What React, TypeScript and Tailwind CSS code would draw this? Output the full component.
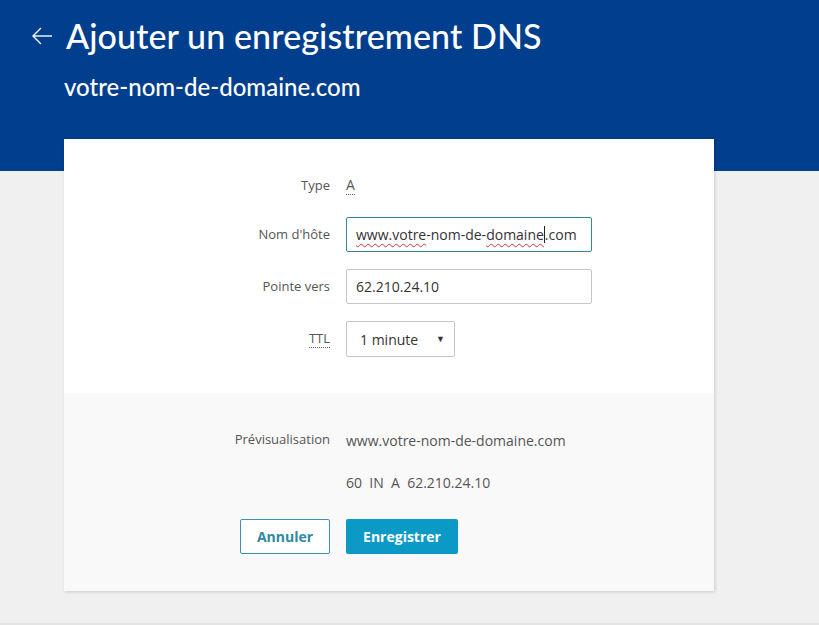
const labelCls = 'w-[282px] shrink-0 pr-4 text-right text-[13px] text-[#555]';

export default function App() {
    return (
        <div className="min-h-[625px] flex flex-col bg-[#f0f0f0]" style={{ fontFamily: '"Open Sans", sans-serif' }}>
            {/* En-tête bleu */}
            <div className="h-[171px] bg-[#023e8e] text-white" style={{ fontFamily: 'Lato, sans-serif' }}>
                <div className="flex items-center pl-[31px] pt-[14px]">
                    <svg width="22" height="20" viewBox="0 0 22 20" fill="none" stroke="currentColor" strokeWidth="1.4" className="mr-[13px]">
                        <path d="M21 10H2" />
                        <path d="M10 2L2 10l8 8" />
                    </svg>
                    <h1 className="text-[34px] leading-[44px] font-medium tracking-[0.1px]">Ajouter un enregistrement DNS</h1>
                </div>
                <p className="pl-[64px] mt-[14px] text-[24px] leading-[30px] font-medium">votre-nom-de-domaine.com</p>
            </div>

            <div className="flex-1 pb-[32px]">
                <div className="ml-[64px] w-[650px] -mt-[32px] bg-white shadow-[1px_1px_3px_rgba(0,0,0,0.15)]">
                    <div className="pt-[32px] pb-[36px] flex flex-col gap-[17px]">
                        <div className="flex items-center h-[29px]">
                            <span className={labelCls}>Type</span>
                            <span className="text-[14px] text-[#555] border-b border-dotted border-[#666] leading-[18px]">A</span>
                        </div>
                        <div className="flex items-center">
                            <span className={labelCls}>Nom d'hôte</span>
                            <div className="w-[246px] h-[35px] border border-[#2f8a92] rounded-[2px] flex items-center px-[9px] text-[14px] text-[#333]">
                                <span className="underline decoration-wavy decoration-[#d33] underline-offset-[3px] decoration-[1px]">www.votre</span>
                                <span>-nom-de-</span>
                                <span className="underline decoration-wavy decoration-[#d33] underline-offset-[3px] decoration-[1px]">domaine</span>
                                <span className="inline-block w-px h-[17px] bg-[#222]" />
                                <span>.com</span>
                            </div>
                        </div>
                        <div className="flex items-center">
                            <span className={labelCls}>Pointe vers</span>
                            <div className="w-[246px] h-[35px] border border-[#c6c6c6] rounded-[2px] flex items-center px-[9px] text-[14px] text-[#333]">
                                62.210.24.10
                            </div>
                        </div>
                        <div className="flex items-center">
                            <span className={labelCls}>
                                <span className="border-b border-dotted border-[#666]">TTL</span>
                            </span>
                            <div className="w-[109px] h-[36px] border border-[#c6c6c6] rounded-[2px] flex items-center justify-between pl-[13px] pr-[9px] text-[14px] text-[#333]">
                                <span>1 minute</span>
                                <span className="text-[9px] text-[#333]">▼</span>
                            </div>
                        </div>
                    </div>

                    <div className="bg-[#f9f9f9] pt-[37px] pb-[37px]">
                        <div className="flex items-center h-[20px]">
                            <span className={labelCls}>Prévisualisation</span>
                            <span className="text-[14px] text-[#555]">www.votre-nom-de-domaine.com</span>
                        </div>
                        <div className="flex items-center h-[20px] mt-[22px]">
                            <span className={labelCls} />
                            <span className="text-[14px] text-[#555] whitespace-pre">60  IN  A  62.210.24.10</span>
                        </div>
                        <div className="flex mt-[27px]">
                            <div className="w-[282px] shrink-0 pr-4 flex justify-end">
                                <button className="w-[90px] h-[35px] border border-[#3a93a8] rounded-[2px] bg-white text-[14px] font-bold text-[#2f8aa2]">
                                    Annuler
                                </button>
                            </div>
                            <button className="w-[112px] h-[35px] rounded-[2px] bg-[#0b9ac6] text-[14px] font-bold text-white">
                                Enregistrer
                            </button>
                        </div>
                    </div>
                </div>
            </div>
            <div className="h-[2px] bg-[#e4e4e4]" />
        </div>
    );
}
